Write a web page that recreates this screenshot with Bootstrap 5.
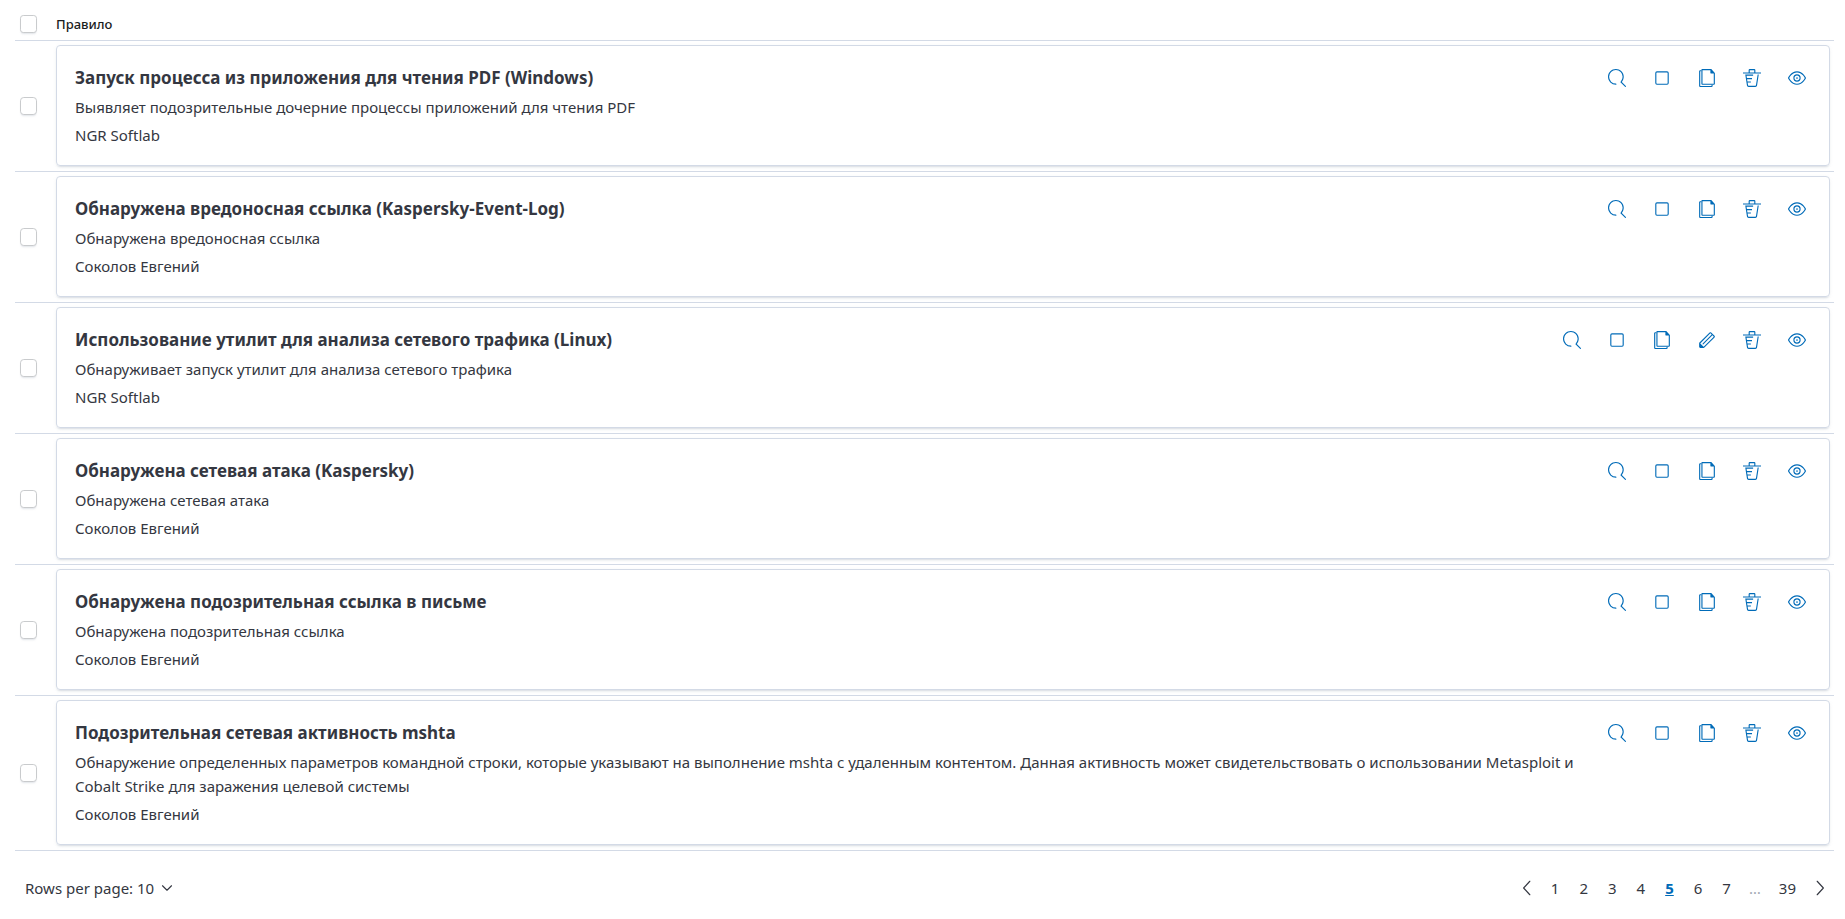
<!DOCTYPE html>
<html lang="ru">
<head>
<meta charset="utf-8">
<meta name="viewport" content="width=device-width, initial-scale=1">
<title>Правила</title>
<link href="https://cdn.jsdelivr.net/npm/bootstrap@5.3.0/dist/css/bootstrap.min.css" rel="stylesheet">
<style>
  body { font-family: "Noto Sans", "Open Sans", sans-serif; font-size: 15px; line-height: 24px; color: #343741; background: #fff; }
  .page-wrap { padding: 0 11px 0 15px; }
  .rules { width: 100%; border-collapse: separate; border-spacing: 0; }
  .rules th, .rules td { padding: 0; border-bottom: 1px solid #d3dae6; }
  .rules thead th { height: 41px; padding-top: 8px; font-size: 13px; font-weight: 500; color: #1a1c21; vertical-align: middle; }
  .rules tbody td { padding: 4px 4px 5px 0; }
  .rules .check-col { width: 41px; padding-left: 5px; padding-right: 0; }
  .form-check-input { display: block; width: 17px; height: 18px; margin: 0; border: 1px solid #c9cbcd; border-radius: 4px; box-shadow: 0 2px 2px -1px rgba(152, 162, 179, .3); }
  .rule-card { padding: 18px 19px 18px 18px; border: 1px solid #d3dae6; border-radius: 4px; box-shadow: 0 2px 2px -1px rgba(152, 162, 179, .3), 0 1px 5px -2px rgba(152, 162, 179, .3); }
  .rule-text { max-width: 1530px; }
  .rule-title { font-size: 17px; line-height: 27px; font-weight: 700; margin: 0 0 4px; }
  .rule-desc { margin: 0 0 4px; }
  .actions { gap: 18px; }
  .icon-btn { width: 27px; height: 27px; padding: 0; border: 0; color: #006bb8; display: flex; align-items: center; justify-content: center; }
  .icon-btn svg { width: 18px; height: 18px; fill: currentColor; }
  .table-footer { padding: 23px 0 0 5px; }
  .rows-btn, .rows-btn:hover { padding: 0 5px; border: 0; font-size: 15px; line-height: 28px; color: #343741; }
  .pager li > * { display: block; padding: 0 10px; line-height: 28px; color: #343741; text-decoration: none; }
  .pager li > .current { color: #006bb8; font-weight: 700; text-decoration: underline; }
  .pager li > .dots { padding: 0 8px; color: #a2a8b3; }
  .pager li > .arrow { padding: 0 5px; }
  .chev { width: 18px; height: 18px; fill: none; stroke: currentColor; stroke-linecap: round; stroke-linejoin: round; }
</style>
</head>
<body>
<svg class="d-none" aria-hidden="true">
  <symbol id="i-search" viewBox="0 0 16 16"><path d="M11.271 11.978l3.872 3.873a.502.502 0 00.708 0 .502.502 0 000-.708l-3.565-3.564c2.38-2.747 2.267-6.923-.342-9.532-2.73-2.73-7.17-2.73-9.898 0-2.728 2.729-2.728 7.17 0 9.9a6.955 6.955 0 004.949 2.05.5.5 0 000-1 5.96 5.96 0 01-4.242-1.757 6.01 6.01 0 010-8.486 6.004 6.004 0 018.484 0 6.01 6.01 0 010 8.486.5.5 0 00-.034.738z"/></symbol>
  <symbol id="i-stop" viewBox="0 0 16 16"><rect x="2.5" y="2.5" width="11" height="11" rx="1" fill="none" stroke="currentColor"/></symbol>
  <symbol id="i-copy" viewBox="0 0 16 16"><path d="M11.4 0c.235 0 .46.099.622.273l2.743 3c.151.162.235.378.235.602v9.25a.867.867 0 01-.857.875H3.857A.867.867 0 013 13.125V.875C3 .392 3.384 0 3.857 0H11.4zM14 4h-2.6a.4.4 0 01-.4-.4V1H4v12h10V4z"/><path d="M3 1H2a1 1 0 00-1 1v13a1 1 0 001 1h10a1 1 0 001-1v-1h-1v1H2V2h1V1z"/></symbol>
  <symbol id="i-pencil" viewBox="0 0 16 16"><path d="M12.148 3.148L11 2l-9 9v3h3l9-9-1.144-1.144-8.002 7.998a.502.502 0 01-.708-.708l8.002-7.998zM11 1c.256 0 .512.098.707.293l3 3a.999.999 0 010 1.414l-9 9A.997.997 0 015 15H2a1 1 0 01-1-1v-3c0-.265.105-.52.293-.707l9-9A.997.997 0 0111 1zM5 14H2v-3l3 3z"/></symbol>
  <symbol id="i-trash" viewBox="0 0 16 16"><path d="M11 3h5v1H0V3h5V1a1 1 0 011-1h4a1 1 0 011 1v2zm-7.056 8H7v1H4.1l.392 2.519c.042.269.254.458.493.458h6.03c.239 0 .451-.189.493-.458l1.498-9.576H14l-1.504 9.73c-.116.747-.74 1.304-1.481 1.304h-6.03c-.741 0-1.365-.557-1.481-1.304l-1.511-9.73H9V5.95H3.157L3.476 8H8v1H3.632l.312 2zM6 3h4V1H6v2z"/></symbol>
  <symbol id="i-eye" viewBox="0 0 16 16"><path fill-rule="evenodd" d="M15.98 7.873c.013.03.02.064.02.098v.06a.24.24 0 01-.02.097C15.952 8.188 13.291 14 8 14S.047 8.188.02 8.128A.24.24 0 010 8.03v-.059c0-.034.007-.068.02-.098C.048 7.813 2.709 2 8 2s7.953 5.813 7.98 5.873zm-1.37-.424a12.097 12.097 0 00-1.385-1.862C11.739 3.956 9.999 3 8 3c-2 0-3.74.956-5.225 2.587a12.098 12.098 0 00-1.701 2.414 12.095 12.095 0 001.7 2.413C4.26 12.043 6.002 13 8 13s3.74-.956 5.225-2.587A12.097 12.097 0 0014.926 8c-.08-.15-.189-.343-.315-.551zM8 4.75A3.253 3.253 0 0111.25 8 3.254 3.254 0 018 11.25 3.253 3.253 0 014.75 8 3.252 3.252 0 018 4.75zm0 1C6.76 5.75 5.75 6.76 5.75 8S6.76 10.25 8 10.25 10.25 9.24 10.25 8 9.24 5.75 8 5.75zm0 1.5a.75.75 0 100 1.5.75.75 0 000-1.5z"/></symbol>
</svg>

<main class="page-wrap">
  <table class="rules">
    <thead>
      <tr>
        <th class="check-col"><input class="form-check-input" type="checkbox" aria-label="Выбрать все"></th>
        <th scope="col">Правило</th>
      </tr>
    </thead>
    <tbody>
      <tr>
        <td class="check-col"><input class="form-check-input" type="checkbox" aria-label="Выбрать правило"></td>
        <td>
          <div class="rule-card d-flex justify-content-between align-items-start">
            <div class="rule-text">
              <h2 class="rule-title">Запуск процесса из приложения для чтения PDF (Windows)</h2>
              <p class="rule-desc">Выявляет подозрительные дочерние процессы приложений для чтения PDF</p>
              <div>NGR Softlab</div>
            </div>
            <div class="actions d-flex flex-shrink-0">
              <button type="button" class="btn icon-btn" aria-label="Поиск"><svg><use href="#i-search"/></svg></button>
              <button type="button" class="btn icon-btn" aria-label="Остановить"><svg><use href="#i-stop"/></svg></button>
              <button type="button" class="btn icon-btn" aria-label="Копировать"><svg><use href="#i-copy"/></svg></button>
              <button type="button" class="btn icon-btn" aria-label="Удалить"><svg><use href="#i-trash"/></svg></button>
              <button type="button" class="btn icon-btn" aria-label="Просмотр"><svg><use href="#i-eye"/></svg></button>
            </div>
          </div>
        </td>
      </tr>
      <tr>
        <td class="check-col"><input class="form-check-input" type="checkbox" aria-label="Выбрать правило"></td>
        <td>
          <div class="rule-card d-flex justify-content-between align-items-start">
            <div class="rule-text">
              <h2 class="rule-title">Обнаружена вредоносная ссылка (Kaspersky-Event-Log)</h2>
              <p class="rule-desc">Обнаружена вредоносная ссылка</p>
              <div>Соколов Евгений</div>
            </div>
            <div class="actions d-flex flex-shrink-0">
              <button type="button" class="btn icon-btn" aria-label="Поиск"><svg><use href="#i-search"/></svg></button>
              <button type="button" class="btn icon-btn" aria-label="Остановить"><svg><use href="#i-stop"/></svg></button>
              <button type="button" class="btn icon-btn" aria-label="Копировать"><svg><use href="#i-copy"/></svg></button>
              <button type="button" class="btn icon-btn" aria-label="Удалить"><svg><use href="#i-trash"/></svg></button>
              <button type="button" class="btn icon-btn" aria-label="Просмотр"><svg><use href="#i-eye"/></svg></button>
            </div>
          </div>
        </td>
      </tr>
      <tr>
        <td class="check-col"><input class="form-check-input" type="checkbox" aria-label="Выбрать правило"></td>
        <td>
          <div class="rule-card d-flex justify-content-between align-items-start">
            <div class="rule-text">
              <h2 class="rule-title">Использование утилит для анализа сетевого трафика (Linux)</h2>
              <p class="rule-desc">Обнаруживает запуск утилит для анализа сетевого трафика</p>
              <div>NGR Softlab</div>
            </div>
            <div class="actions d-flex flex-shrink-0">
              <button type="button" class="btn icon-btn" aria-label="Поиск"><svg><use href="#i-search"/></svg></button>
              <button type="button" class="btn icon-btn" aria-label="Остановить"><svg><use href="#i-stop"/></svg></button>
              <button type="button" class="btn icon-btn" aria-label="Копировать"><svg><use href="#i-copy"/></svg></button>
              <button type="button" class="btn icon-btn" aria-label="Изменить"><svg><use href="#i-pencil"/></svg></button>
              <button type="button" class="btn icon-btn" aria-label="Удалить"><svg><use href="#i-trash"/></svg></button>
              <button type="button" class="btn icon-btn" aria-label="Просмотр"><svg><use href="#i-eye"/></svg></button>
            </div>
          </div>
        </td>
      </tr>
      <tr>
        <td class="check-col"><input class="form-check-input" type="checkbox" aria-label="Выбрать правило"></td>
        <td>
          <div class="rule-card d-flex justify-content-between align-items-start">
            <div class="rule-text">
              <h2 class="rule-title">Обнаружена сетевая атака (Kaspersky)</h2>
              <p class="rule-desc">Обнаружена сетевая атака</p>
              <div>Соколов Евгений</div>
            </div>
            <div class="actions d-flex flex-shrink-0">
              <button type="button" class="btn icon-btn" aria-label="Поиск"><svg><use href="#i-search"/></svg></button>
              <button type="button" class="btn icon-btn" aria-label="Остановить"><svg><use href="#i-stop"/></svg></button>
              <button type="button" class="btn icon-btn" aria-label="Копировать"><svg><use href="#i-copy"/></svg></button>
              <button type="button" class="btn icon-btn" aria-label="Удалить"><svg><use href="#i-trash"/></svg></button>
              <button type="button" class="btn icon-btn" aria-label="Просмотр"><svg><use href="#i-eye"/></svg></button>
            </div>
          </div>
        </td>
      </tr>
      <tr>
        <td class="check-col"><input class="form-check-input" type="checkbox" aria-label="Выбрать правило"></td>
        <td>
          <div class="rule-card d-flex justify-content-between align-items-start">
            <div class="rule-text">
              <h2 class="rule-title">Обнаружена подозрительная ссылка в письме</h2>
              <p class="rule-desc">Обнаружена подозрительная ссылка</p>
              <div>Соколов Евгений</div>
            </div>
            <div class="actions d-flex flex-shrink-0">
              <button type="button" class="btn icon-btn" aria-label="Поиск"><svg><use href="#i-search"/></svg></button>
              <button type="button" class="btn icon-btn" aria-label="Остановить"><svg><use href="#i-stop"/></svg></button>
              <button type="button" class="btn icon-btn" aria-label="Копировать"><svg><use href="#i-copy"/></svg></button>
              <button type="button" class="btn icon-btn" aria-label="Удалить"><svg><use href="#i-trash"/></svg></button>
              <button type="button" class="btn icon-btn" aria-label="Просмотр"><svg><use href="#i-eye"/></svg></button>
            </div>
          </div>
        </td>
      </tr>
      <tr>
        <td class="check-col"><input class="form-check-input" type="checkbox" aria-label="Выбрать правило"></td>
        <td>
          <div class="rule-card d-flex justify-content-between align-items-start">
            <div class="rule-text">
              <h2 class="rule-title">Подозрительная сетевая активность mshta</h2>
              <p class="rule-desc">Обнаружение определенных параметров командной строки, которые указывают на выполнение mshta с удаленным контентом. Данная активность может свидетельствовать о использовании Metasploit и Cobalt Strike для заражения целевой системы</p>
              <div>Соколов Евгений</div>
            </div>
            <div class="actions d-flex flex-shrink-0">
              <button type="button" class="btn icon-btn" aria-label="Поиск"><svg><use href="#i-search"/></svg></button>
              <button type="button" class="btn icon-btn" aria-label="Остановить"><svg><use href="#i-stop"/></svg></button>
              <button type="button" class="btn icon-btn" aria-label="Копировать"><svg><use href="#i-copy"/></svg></button>
              <button type="button" class="btn icon-btn" aria-label="Удалить"><svg><use href="#i-trash"/></svg></button>
              <button type="button" class="btn icon-btn" aria-label="Просмотр"><svg><use href="#i-eye"/></svg></button>
            </div>
          </div>
        </td>
      </tr>
    </tbody>
  </table>

  <div class="table-footer d-flex justify-content-between align-items-center">
    <button type="button" class="btn rows-btn d-flex align-items-center gap-1">Rows per page: 10
      <svg class="chev" viewBox="0 0 16 16"><path d="M4 6L8 10L12 6"/></svg></button>
    <nav aria-label="Страницы">
      <ul class="pager list-unstyled d-flex align-items-center mb-0">
        <li><a href="#" class="arrow d-flex align-items-center" aria-label="Назад"><svg class="chev my-1" viewBox="0 0 16 16"><path d="M10.5 2L5 8l5.500 6"/></svg></a></li>
        <li><a href="#">1</a></li>
        <li><a href="#">2</a></li>
        <li><a href="#">3</a></li>
        <li><a href="#">4</a></li>
        <li><a href="#" class="current" aria-current="page">5</a></li>
        <li><a href="#">6</a></li>
        <li><a href="#">7</a></li>
        <li><span class="dots">…</span></li>
        <li><a href="#">39</a></li>
        <li><a href="#" class="arrow d-flex align-items-center" aria-label="Вперёд"><svg class="chev my-1" viewBox="0 0 16 16"><path d="M5.500 2L11 8l-5.500 6"/></svg></a></li>
      </ul>
    </nav>
  </div>
</main>
<script src="https://cdn.jsdelivr.net/npm/bootstrap@5.3.0/dist/js/bootstrap.bundle.min.js"></script>
</body>
</html>
